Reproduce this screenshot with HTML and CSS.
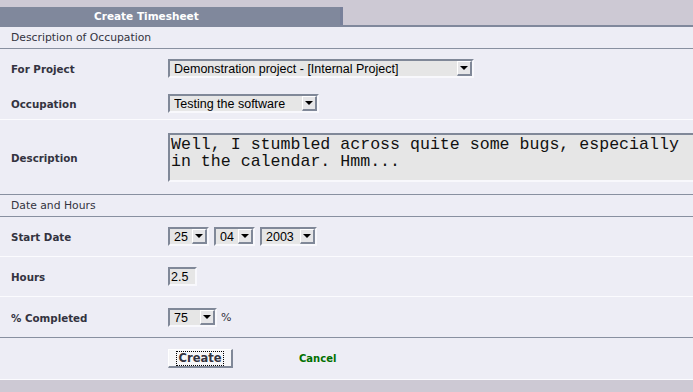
FILE: index.html
```html
<!DOCTYPE html>
<html lang="en">

<head>
    <meta charset="UTF-8">
    <title>Create Timesheet</title>
    <link rel="stylesheet" href="styles.css">
</head>

<body>
    <div id="page">
        <div class="topbar">
            <div class="tab">Create Timesheet</div>
        </div>

        <div class="section">Description of Occupation</div>
        <div class="group first">
            <div class="row">
                <div class="label">For Project</div>
                <div class="field">
                    <span class="combo w-project">
                        <select><option>Demonstration project - [Internal Project]</option></select>
                        <span class="arrow"></span>
                    </span>
                </div>
            </div>
            <div class="row">
                <div class="label">Occupation</div>
                <div class="field">
                    <span class="combo w-occupation">
                        <select><option>Testing the software</option></select>
                        <span class="arrow"></span>
                    </span>
                </div>
            </div>
        </div>
        <div class="group desc">
            <div class="row">
                <div class="label">Description</div>
                <div class="field">
                    <textarea id="description">Well, I stumbled across quite some bugs, especially in the calendar. Hmm...</textarea>
                </div>
            </div>
        </div>

        <div class="section">Date and Hours</div>
        <div class="group line">
            <div class="row">
                <div class="label">Start Date</div>
                <div class="field">
                    <span class="combo w-day">
                        <select><option>25</option></select>
                        <span class="arrow"></span>
                    </span>
                    <span class="combo w-month">
                        <select><option>04</option></select>
                        <span class="arrow"></span>
                    </span>
                    <span class="combo w-year">
                        <select><option>2003</option></select>
                        <span class="arrow"></span>
                    </span>
                </div>
            </div>
        </div>
        <div class="group line">
            <div class="row">
                <div class="label">Hours</div>
                <div class="field">
                    <input class="text w-hours" type="text" value="2.5">
                </div>
            </div>
        </div>
        <div class="group dark">
            <div class="row">
                <div class="label">% Completed</div>
                <div class="field">
                    <span class="combo w-percent">
                        <select><option>75</option></select>
                        <span class="arrow"></span>
                    </span>
                    <span class="unit">%</span>
                </div>
            </div>
        </div>
        <div class="group buttons">
            <div class="row">
                <div class="label"></div>
                <div class="field">
                    <button class="btn"><span>Create</span></button>
                    <a class="cancel" href="#">Cancel</a>
                </div>
            </div>
        </div>
    </div>
</body>

</html>
```

FILE: styles.css
```css
body {
    background-color: #cdc9d4;
    font-family: "DejaVu Sans", Verdana, sans-serif;
    font-size: 11px;
    color: #333340;
    margin: 0;
    padding: 0;
    overflow: hidden;
}

#page {
    width: 693px;
    overflow: hidden;
    background-color: #ededf5;
}

.topbar {
    background-color: #cdc9d4;
    height: 25px;
    border-bottom: 2px solid #80889c;
    display: flex;
    align-items: flex-end;
}

.tab {
    width: 343px;
    height: 18px;
    box-sizing: border-box;
    padding-left: 94px;
    background-color: #80889c;
    border-right: 3px solid #78809a;
    color: #fff;
    font-weight: bold;
    font-size: 10.5px;
    line-height: 18px;
}

.section {
    height: 21px;
    line-height: 21px;
    padding-left: 11px;
    font-size: 10.8px;
    color: #333340;
    border-bottom: 1px solid #8890a0;
}

.group {
    display: flex;
    flex-direction: column;
}

.group.first {
    padding: 10px 0 6px;
    gap: 16px;
    border-bottom: 1px solid #fbfbfe;
}

.group.desc {
    padding: 13px 0 12px;
    border-bottom: 1px solid #8890a0;
}

.group.line {
    padding: 10px 0 10px;
    border-bottom: 1px solid #fbfbfe;
}

.group.dark {
    padding: 11px 0 10px;
    border-bottom: 1px solid #8890a0;
}

.group.buttons {
    padding: 11px 0 11px;
    border-bottom: 1px solid #fbfbfe;
}

.row {
    display: grid;
    grid-template-columns: 168px 1fr;
    align-items: center;
}

.label {
    padding-left: 11px;
    font-weight: bold;
    font-size: 10.3px;
    color: #333340;
}

.field {
    display: flex;
    align-items: center;
    gap: 5px;
    min-width: 0;
}

.combo {
    position: relative;
    display: inline-block;
    height: 19px;
}

.combo select {
    -webkit-appearance: none;
    appearance: none;
    width: 100%;
    height: 19px;
    box-sizing: border-box;
    margin: 0;
    padding: 0 18px 0 4px;
    border-style: solid;
    border-width: 2px;
    border-color: #808898 #f8f8fc #f8f8fc #808898;
    border-radius: 0;
    background-color: #e6e6e6;
    font-family: "Liberation Sans", Arial, sans-serif;
    font-size: 12.5px;
    color: #000;
    outline: none;
}

.arrow {
    position: absolute;
    right: 2px;
    top: 2px;
    width: 15px;
    height: 15px;
    box-sizing: border-box;
    background-color: #e6e6e8;
    border-style: solid;
    border-width: 1px 2px 2px 1px;
    border-color: #fff #808898 #808898 #fff;
    pointer-events: none;
}

.arrow::before {
    content: "";
    position: absolute;
    left: 2px;
    top: 4px;
    border-left: 4px solid transparent;
    border-right: 4px solid transparent;
    border-top: 4px solid #000;
}

.w-project { width: 306px; }
.w-occupation { width: 151px; }
.w-day { width: 41px; }
.w-month { width: 41px; }
.w-year { width: 57px; }
.w-percent { width: 49px; }

#description {
    width: 540px;
    height: 49px;
    box-sizing: border-box;
    margin: 0;
    padding: 1px 1px;
    border-style: solid;
    border-width: 2px;
    border-color: #808898 #f8f8fc #f8f8fc #808898;
    background-color: #e6e6e6;
    font-family: "Liberation Mono", "Courier New", monospace;
    font-size: 16.6px;
    line-height: 17px;
    color: #111;
    resize: none;
    overflow: hidden;
    flex-shrink: 0;
}

.text {
    height: 19px;
    box-sizing: border-box;
    margin: 0;
    padding: 0 1px;
    border-style: solid;
    border-width: 2px;
    border-color: #808898 #f8f8fc #f8f8fc #808898;
    background-color: #e6e6e6;
    font-family: "Liberation Sans", Arial, sans-serif;
    font-size: 12.5px;
    color: #000;
}

.w-hours { width: 29px; }

.unit {
    font-family: "DejaVu Sans", Verdana, sans-serif;
    font-size: 11px;
    color: #333340;
    margin-left: -1px;
}

.btn {
    width: 65px;
    height: 19px;
    box-sizing: border-box;
    margin: 0;
    padding: 0;
    border-style: solid;
    border-width: 1px 2px 2px 1px;
    border-color: #fff #808898 #808898 #fff;
    background-color: #f6f6f8;
    font-family: "DejaVu Sans", Verdana, sans-serif;
    font-weight: bold;
    font-size: 11.5px;
    color: #333340;
    display: flex;
    align-items: center;
    justify-content: center;
}

.btn span {
    outline: 1px dotted #000;
    padding: 0 2px;
    line-height: 13px;
}

.cancel {
    margin-left: 61px;
    color: #007000;
    font-weight: bold;
    font-size: 10px;
    text-decoration: none;
}
```
